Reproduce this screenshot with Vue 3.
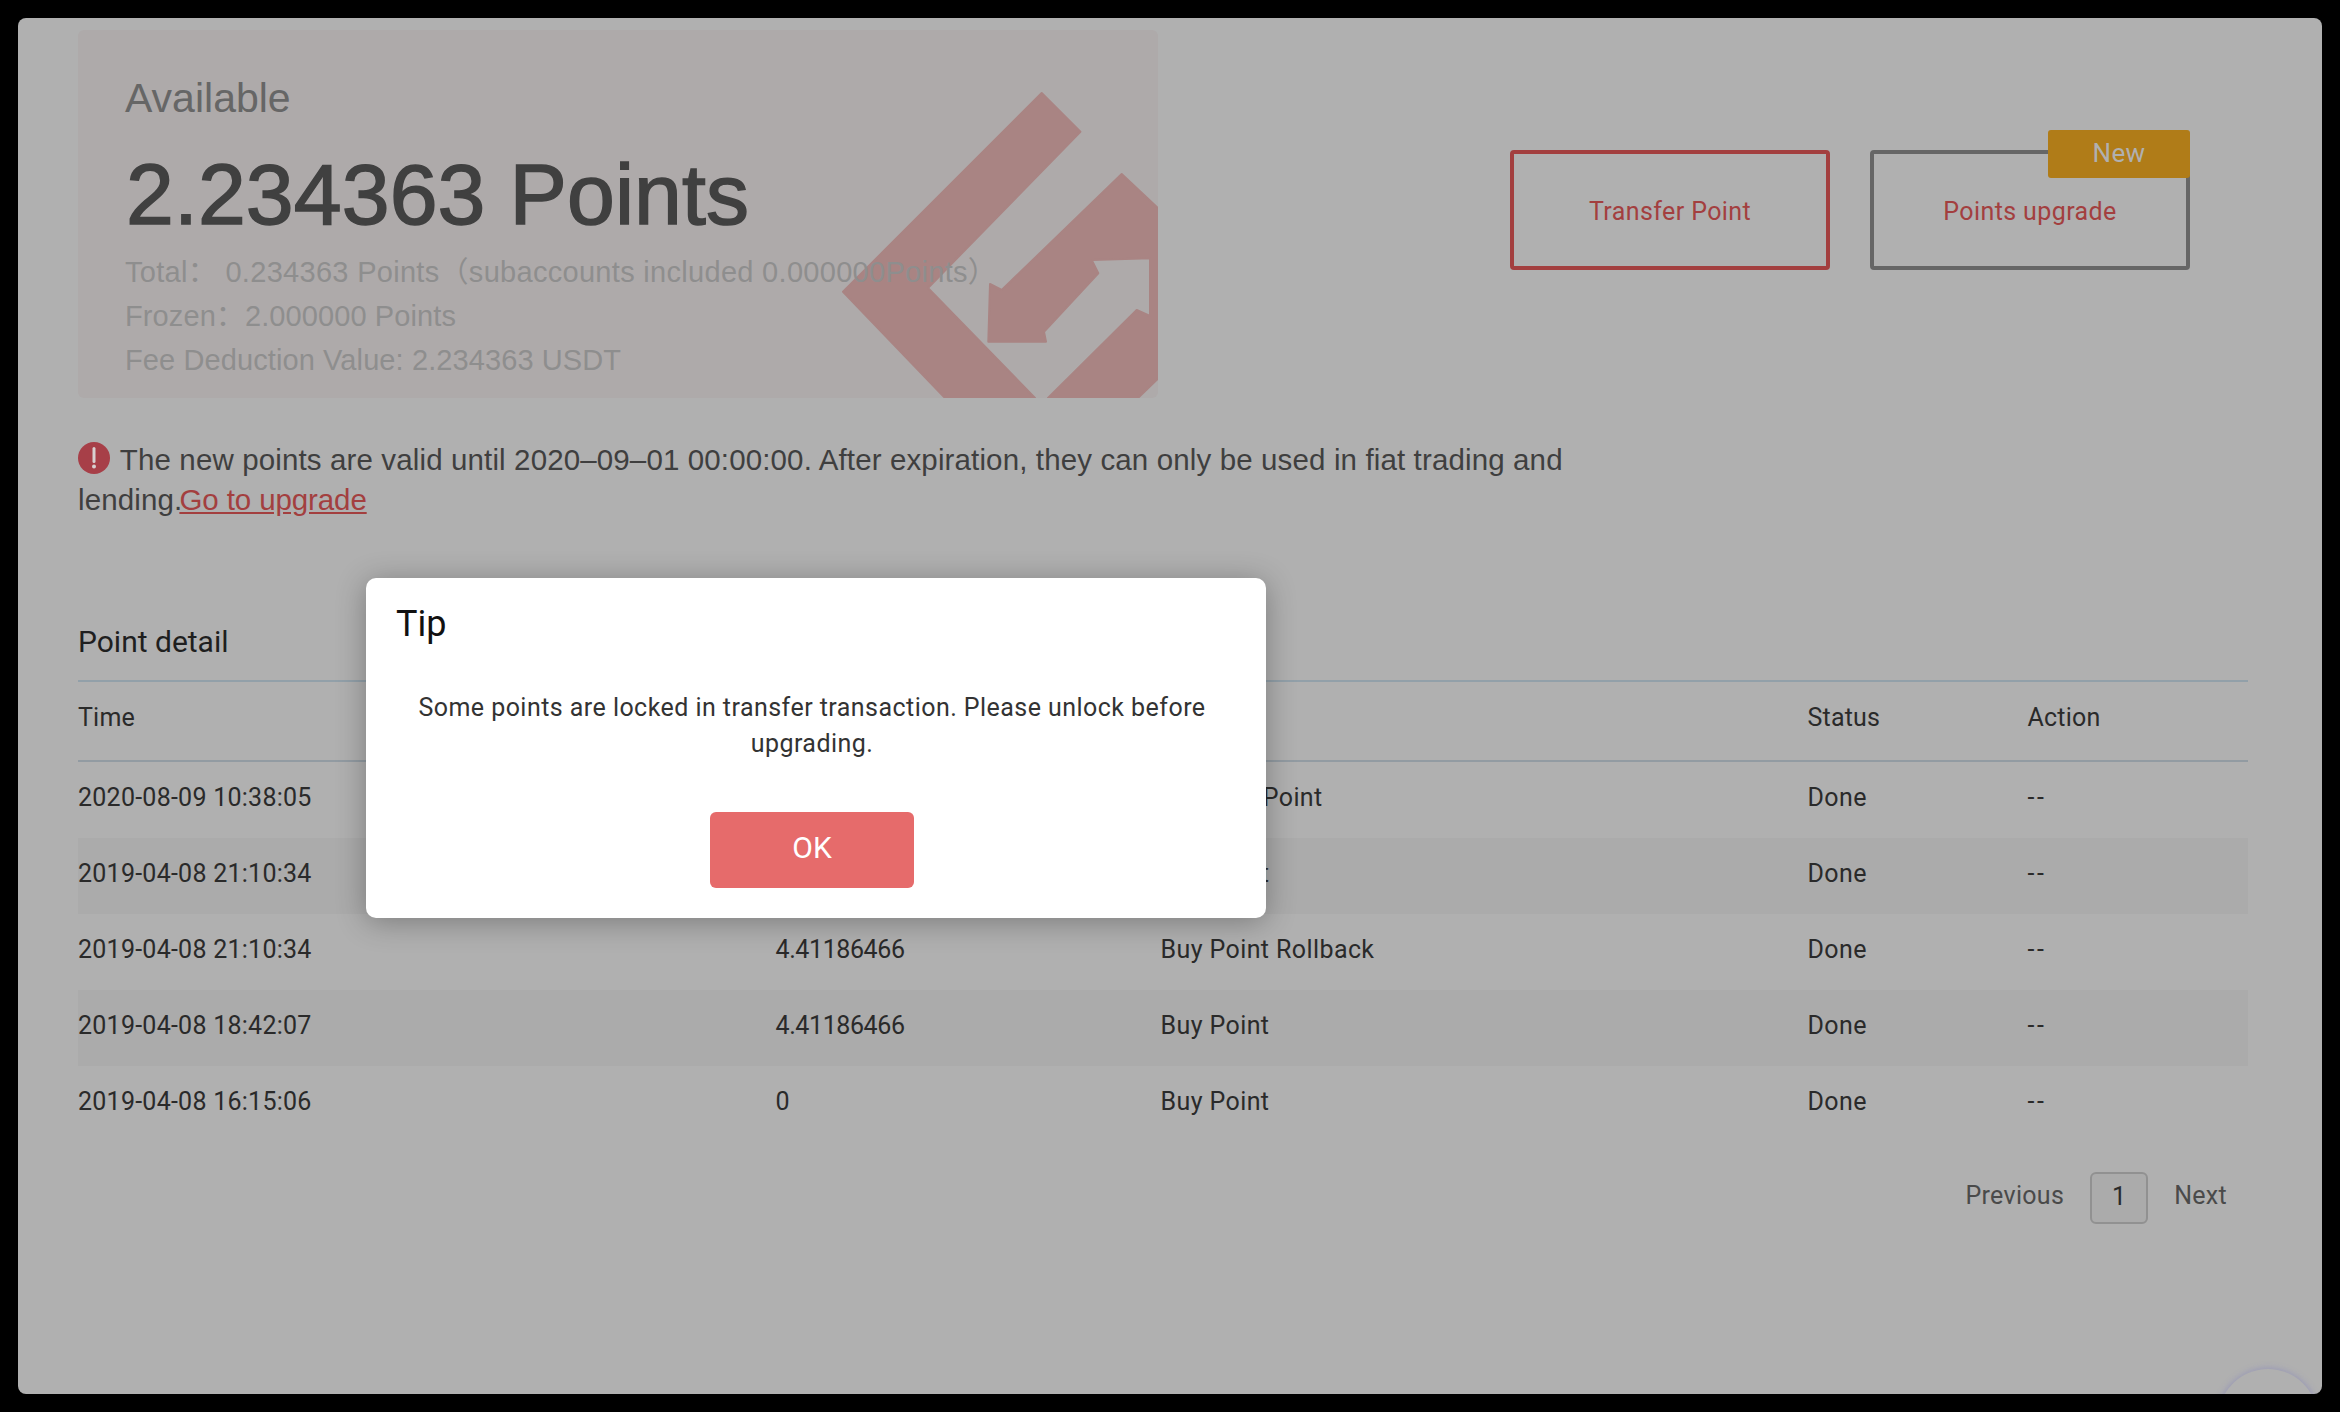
<script setup>
const rows = [
  { time: '2020-08-09 10:38:05', amount: '-2', type: 'Transfer Point' },
  { time: '2019-04-08 21:10:34', amount: '4.41186466', type: 'Buy Point' },
  { time: '2019-04-08 21:10:34', amount: '4.41186466', type: 'Buy Point Rollback' },
  { time: '2019-04-08 18:42:07', amount: '4.41186466', type: 'Buy Point' },
  { time: '2019-04-08 16:15:06', amount: '0', type: 'Buy Point' },
]
</script>

<template>
  <div class="window">
    <div class="main">
      <section class="top">
        <div class="card">
          <svg class="mark" viewBox="0 0 1080 368" width="1080" height="368" aria-hidden="true">
            <polygon points="963.7,63 1002.4,101.7 850,258 957,368 867,368 765,261.7" />
            <polygon points="1043.7,144 1130,225 1130,300 1060,368 970,368 1058.7,280 1072,286 1072,228.3 1013.7,230 1020.3,243.3 966,301.7 968,311.7 910.3,311.7 912,254 923.7,260" />
          </svg>
          <div class="label">Available</div>
          <div class="amount">2.234363 Points</div>
          <div class="meta total">Total：&nbsp;0.234363 Points（subaccounts included 0.000000Points）</div>
          <div class="meta">Frozen：2.000000 Points</div>
          <div class="meta">Fee Deduction Value: 2.234363 USDT</div>
        </div>
        <div class="actions">
          <button class="action primary"><span class="action-text">Transfer Point</span></button>
          <button class="action upgrade">
            <span class="action-text">Points upgrade</span>
            <span class="badge">New</span>
          </button>
        </div>
      </section>

      <p class="notice">
        <svg class="warn" viewBox="0 0 32 32" width="32" height="32" aria-hidden="true">
          <circle cx="16" cy="16" r="16" />
          <path d="M16 6.5v13" />
          <circle class="dot" cx="16" cy="24.5" r="2" />
        </svg>
        The new points are valid until 2020–09–01 00:00:00. After expiration, they can only be used in fiat trading and lending.<a class="link">Go to upgrade</a>
      </p>

      <h2 class="heading">Point detail</h2>
      <div class="table">
        <div class="row head">
          <span>Time</span><span>Amount</span><span>Type</span><span>Status</span><span>Action</span>
        </div>
        <div v-for="(row, i) in rows" :key="i" class="row body" :class="{ striped: i % 2 === 1 }">
          <span class="time">{{ row.time }}</span>
          <span class="num">{{ row.amount }}</span>
          <span>{{ row.type }}</span>
          <span>Done</span>
          <span class="dash">--</span>
        </div>
      </div>

      <nav class="pager">
        <span class="step">Previous</span>
        <span class="page">1</span>
        <span class="step">Next</span>
      </nav>
    </div>

    <div class="fab"></div>

    <div class="modal">
      <h3 class="modal-title">Tip</h3>
      <p class="modal-text">Some points are locked in transfer transaction. Please unlock before upgrading.</p>
      <button class="ok">OK</button>
    </div>
  </div>
</template>

<style scoped>
.window {
  position: relative;
  box-sizing: border-box;
  width: 2304px;
  height: 1376px;
  margin: 18px;
  overflow: hidden;
  border-radius: 8px;
  background: #b0b0b0;
  font-family: Roboto, "Liberation Sans", sans-serif;
  color: #2a2a2a;
}
.main {
  box-sizing: border-box;
  height: 100%;
  padding: 12px 72px 0 60px;
}
.top {
  display: flex;
  justify-content: space-between;
}
.card {
  position: relative;
  box-sizing: border-box;
  width: 1080px;
  height: 368px;
  padding: 43px 0 0 47px;
  overflow: hidden;
  border-radius: 6px;
  background: #aeaaaa;
  font-family: "Liberation Sans", Arial, "Noto Sans CJK SC", sans-serif;
}
.mark {
  position: absolute;
  left: 0;
  top: 0;
}
.mark polygon {
  fill: #a98483;
  stroke: #a98483;
  stroke-width: 2;
  stroke-linejoin: round;
}
.label {
  position: relative;
  font-size: 41px;
  line-height: 50px;
  color: #666;
}
.amount {
  position: relative;
  margin-top: 21px;
  padding-left: 1px;
  font-size: 86px;
  letter-spacing: 0.1px;
  line-height: 100px;
  color: #404040;
  -webkit-text-stroke: 1.5px #404040;
}
.meta {
  position: relative;
  font-size: 29px;
  letter-spacing: 0.1px;
  line-height: 44px;
  color: #8e8e8e;
  white-space: nowrap;
}
.total {
  letter-spacing: 0.3px;
}
.amount + .meta {
  margin-top: 6px;
}
.actions {
  display: flex;
  gap: 40px;
  margin-top: 120px;
  padding-right: 60px;
  align-items: flex-start;
}
.action {
  position: relative;
  box-sizing: border-box;
  width: 320px;
  height: 120px;
  padding: 2px 0 0;
  border: 4px solid #a33f3f;
  border-radius: 4px;
  background: transparent;
  font-family: inherit;
  font-size: 25px;
  letter-spacing: 0.4px;
  color: #a33f3f;
}
.upgrade {
  border-color: #666;
}
.badge {
  position: absolute;
  top: -24px;
  right: -4px;
  width: 142px;
  height: 48px;
  border-radius: 3px;
  background: #b07c18;
  font-size: 26px;
  letter-spacing: 0.3px;
  line-height: 46px;
  color: #b0b0b0;
}
.notice {
  width: 1510px;
  margin: 42px 0 0;
  font-family: "Liberation Sans", Arial, sans-serif;
  font-size: 29.5px;
  letter-spacing: 0.13px;
  line-height: 40px;
  color: #3f3f3f;
}
.warn {
  margin-right: 2px;
  vertical-align: -4px;
}
.warn > circle {
  fill: #a73f48;
}
.warn path {
  stroke: #d8d0d0;
  stroke-width: 3;
  stroke-linecap: round;
}
.warn .dot {
  fill: #d8d0d0;
}
.link {
  margin-left: -3px;
  letter-spacing: -0.1px;
  color: #a33f3f;
  text-decoration: underline;
}
.heading {
  box-sizing: border-box;
  height: 60px;
  margin: 100px 0 0;
  font-size: 30px;
  font-weight: 400;
  line-height: 44px;
  color: #1f1f1f;
}
.table {
  border-top: 2px solid #92a0a9;
  width: 2170px;
}
.row {
  display: grid;
  grid-template-columns: 697.5px 385px 647px 220px 1fr;
  align-items: center;
  font-size: 25px;
  letter-spacing: 0.4px;
}
.head {
  box-sizing: border-box;
  height: 80px;
  padding-bottom: 8px;
  border-bottom: 2px solid #929ba2;
  letter-spacing: 0.2px;
}
.body {
  height: 76px;
  padding-bottom: 5px;
  box-sizing: border-box;
}
.time {
  letter-spacing: 0.25px;
}
.num {
  letter-spacing: -0.4px;
}
.dash {
  letter-spacing: 2.5px;
}
.striped {
  background: #ababab;
}
.pager {
  display: flex;
  justify-content: flex-end;
  align-items: center;
  gap: 26px;
  margin-top: 30px;
  padding-right: 23px;
  font-size: 25px;
  color: #4a4a4a;
}
.step {
  margin-bottom: 5px;
  letter-spacing: 0.3px;
}
.page {
  box-sizing: border-box;
  width: 58px;
  height: 52px;
  border: 2px solid #919191;
  border-radius: 6px;
  background: #ababab;
  line-height: 46px;
  text-align: center;
  color: #2a2a2a;
}
.fab {
  position: absolute;
  left: 2200px;
  top: 1351px;
  width: 100px;
  height: 100px;
  border-radius: 50%;
  background: #b0b0b0;
  box-shadow: 0 0 6px 1px #9898b6;
}
.modal {
  position: absolute;
  left: 348px;
  top: 560px;
  box-sizing: border-box;
  width: 900px;
  height: 340px;
  padding: 24px 8px 0 0;
  border-radius: 10px;
  background: #fff;
  box-shadow: 0 4px 30px rgba(0, 0, 0, 0.3);
  text-align: center;
}
.modal-title {
  margin: 0 0 0 30px;
  font-size: 36px;
  font-weight: 400;
  line-height: 44px;
  text-align: left;
  color: #111;
}
.modal-text {
  margin: 44px 30px 0;
  font-size: 25px;
  letter-spacing: 0.45px;
  line-height: 36px;
  color: #333;
}
.ok {
  display: block;
  width: 204px;
  height: 76px;
  margin: 50px auto 0;
  padding: 0 0 6px;
  border: 0;
  border-radius: 6px;
  background: #e66b6b;
  font-family: inherit;
  font-size: 30px;
  color: #fff;
}
</style>

<style>
html, body {
  margin: 0;
  background: #000;
}
</style>
